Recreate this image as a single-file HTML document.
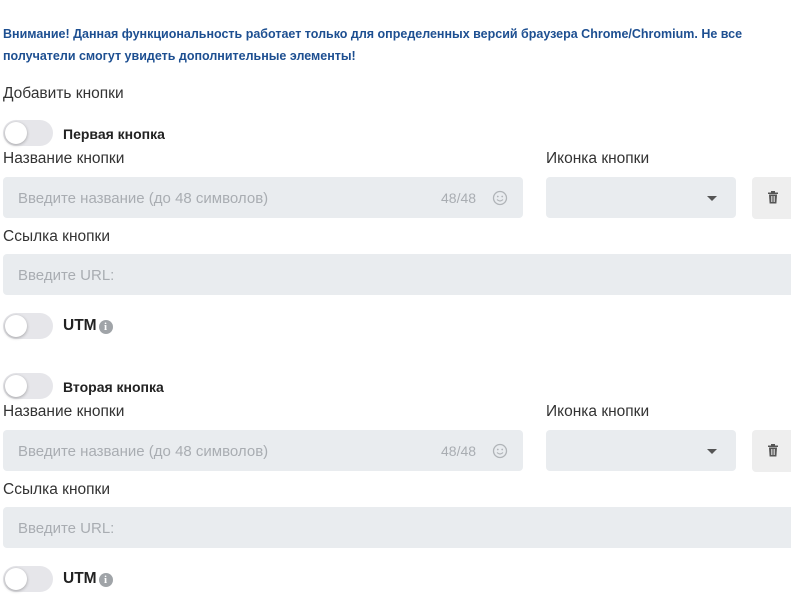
<!DOCTYPE html>
<html><head><meta charset="utf-8"><style>
body{margin:0;width:791px;height:610px;overflow:hidden;background:#fff;font-family:"Liberation Sans",sans-serif;color:#333;position:relative}
.a{position:absolute;white-space:nowrap}
.warn{left:3px;font-size:12.5px;font-weight:bold;color:#1d4f91}
.tg{position:absolute;left:3px;width:50px;height:26px;border-radius:13px;background:#e6e6ea}
.tg:after{content:"";position:absolute;left:2px;top:2px;width:22px;height:22px;border-radius:50%;background:#fff;box-shadow:0 1px 3px rgba(0,0,0,.3)}
.lbl{font-size:15.5px;color:#333}
.bold{font-weight:bold;font-size:14px;color:#222}
.inp{position:absolute;background:#e9ecef;border-radius:4px}
.ph{position:absolute;font-size:15px;color:#a9adb2;white-space:nowrap}
.info{display:inline-block;width:14px;height:14px;border-radius:50%;background:#a0a4a8;color:#fff;font-size:11px;font-weight:bold;text-align:center;line-height:14px;vertical-align:0px;margin-left:2px;font-family:"Liberation Serif",serif}
</style></head><body>
<div class="a warn" style="top:27px">Внимание! Данная функциональность работает только для определенных версий браузера Chrome/Chromium. Не все</div>
<div class="a warn" style="top:49px">получатели смогут увидеть дополнительные элементы!</div>
<div class="a lbl" style="left:3px;top:85px;font-size:15.5px">Добавить кнопки</div>

<div id="b1"></div>
<script>
function blk(o){
return `<div class="tg" style="top:${120+o}px"></div>
<div class="a bold" style="left:63px;top:${126+o}px">${o?'Вторая кнопка':'Первая кнопка'}</div>
<div class="a lbl" style="left:3px;top:${150+o}px">Название кнопки</div>
<div class="a lbl" style="left:546px;top:${150+o}px">Иконка кнопки</div>
<div class="inp" style="left:3px;top:${177+o}px;width:520px;height:41px"></div>
<div class="ph" style="left:18px;top:${190+o}px">Введите название (до 48 символов)</div>
<div class="ph" style="left:441px;top:${190+o}px;font-size:14px">48/48</div>
<svg class="a" style="left:492px;top:${190+o}px" width="16" height="16" viewBox="0 0 16 16"><circle cx="8" cy="8" r="6.5" fill="none" stroke="#b0b4b8" stroke-width="1.3"/><circle cx="5.8" cy="6.5" r=".9" fill="#b0b4b8"/><circle cx="10.2" cy="6.5" r=".9" fill="#b0b4b8"/><path d="M5 9.5q3 3 6 0" fill="none" stroke="#b0b4b8" stroke-width="1.2"/></svg>
<div class="inp" style="left:546px;top:${177+o}px;width:190px;height:41px"></div>
<div class="a" style="left:707px;top:${196+o}px;width:0;height:0;border-left:5px solid transparent;border-right:5px solid transparent;border-top:5px solid #555"></div>
<div class="inp" style="left:752px;top:${177+o}px;width:45px;height:42px;background:#eeeeee"></div>
<svg class="a" style="left:767px;top:${191+o}px" width="12" height="13" viewBox="0 0 12 13"><rect x="1" y="1.5" width="10" height="1.5" fill="#555"/><rect x="4" y="0" width="4" height="2" fill="#555"/><path d="M2 3.5h8l-.6 9h-6.8z" fill="#555"/><path d="M4.5 5v6M6 5v6M7.5 5v6" stroke="#eee" stroke-width=".7"/></svg>
<div class="a lbl" style="left:3px;top:${228+o}px">Ссылка кнопки</div>
<div class="inp" style="left:3px;top:${254+o}px;width:800px;height:41px"></div>
<div class="ph" style="left:18px;top:${267+o}px">Введите URL:</div>
<div class="tg" style="top:${313+o}px"></div>
<div class="a bold" style="left:63px;top:${317+o}px;font-size:15.5px">UTM<span class="info">i</span></div>`;}
document.getElementById('b1').outerHTML=blk(0)+blk(253);
</script>
</body></html>
